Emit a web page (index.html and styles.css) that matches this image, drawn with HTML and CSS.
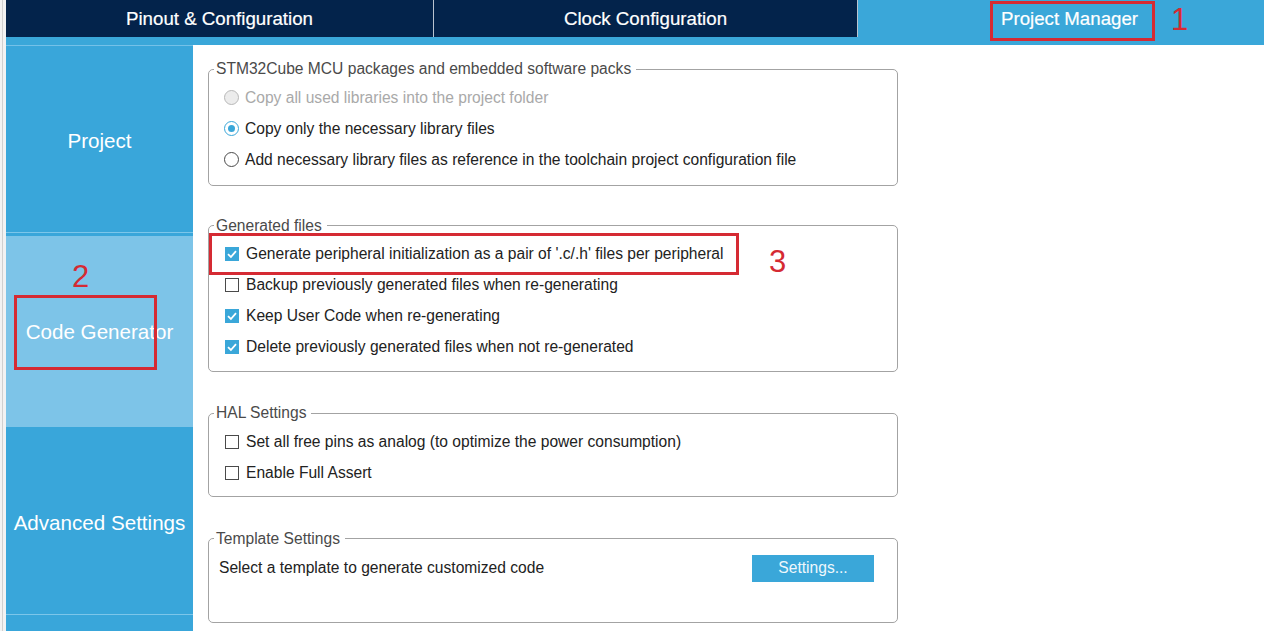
FILE: index.html
```html
<!DOCTYPE html>
<html lang="en">
<head>
<meta charset="utf-8">
<title>Project Manager - Code Generator</title>
<link rel="stylesheet" href="styles.css">
</head>
<body>
<div class="app">
  <div class="gutter"></div>
  <div class="main">
    <nav class="tabs">
      <div class="tab tab-first">Pinout &amp; Configuration</div>
      <div class="tab-sep"></div>
      <div class="tab">Clock Configuration</div>
      <div class="tab-sep"></div>
      <div class="tab tab-active">Project Manager</div>
    </nav>
    <div class="strip"></div>
    <div class="body">
      <aside class="sidebar">
        <div class="side-item side-project">Project</div>
        <div class="side-gap"></div>
        <div class="side-item side-code">Code Generator</div>
        <div class="side-item side-adv">Advanced Settings</div>
        <div class="side-item side-rest"></div>
      </aside>
      <section class="content">
        <fieldset class="group group-first">
          <legend>STM32Cube MCU packages and embedded software packs</legend>
          <div class="row disabled"><span class="radio radio-disabled"></span><span>Copy all used libraries into the project folder</span></div>
          <div class="row"><span class="radio radio-on"></span><span>Copy only the necessary library files</span></div>
          <div class="row"><span class="radio"></span><span>Add necessary library files as reference in the toolchain project configuration file</span></div>
        </fieldset>

        <fieldset class="group">
          <legend>Generated files</legend>
          <div class="row"><span class="check check-on"><svg viewBox="0 0 14 14" width="14" height="14"><path d="M3 7.2 L5.9 10 L11 4.2" fill="none" stroke="#fff" stroke-width="1.8"/></svg></span><span>Generate peripheral initialization as a pair of '.c/.h' files per peripheral</span></div>
          <div class="row"><span class="check"></span><span>Backup previously generated files when re-generating</span></div>
          <div class="row"><span class="check check-on"><svg viewBox="0 0 14 14" width="14" height="14"><path d="M3 7.2 L5.9 10 L11 4.2" fill="none" stroke="#fff" stroke-width="1.8"/></svg></span><span>Keep User Code when re-generating</span></div>
          <div class="row"><span class="check check-on"><svg viewBox="0 0 14 14" width="14" height="14"><path d="M3 7.2 L5.9 10 L11 4.2" fill="none" stroke="#fff" stroke-width="1.8"/></svg></span><span>Delete previously generated files when not re-generated</span></div>
        </fieldset>

        <fieldset class="group">
          <legend>HAL Settings</legend>
          <div class="row"><span class="check"></span><span>Set all free pins as analog (to optimize the power consumption)</span></div>
          <div class="row"><span class="check"></span><span>Enable Full Assert</span></div>
        </fieldset>

        <fieldset class="group group-template">
          <legend>Template Settings</legend>
          <div class="template-body">
            <div class="template-row">
              <span>Select a template to generate customized code</span>
              <button class="btn" type="button">Settings...</button>
            </div>
          </div>
        </fieldset>
      </section>
    </div>
  </div>
</div>

<div class="mark mark-box box-1"></div>
<div class="mark mark-num num-1">1</div>
<div class="mark mark-box box-2"></div>
<div class="mark mark-num num-2">2</div>
<div class="mark mark-box box-3"></div>
<div class="mark mark-num num-3">3</div>
</body>
</html>
```

FILE: styles.css
```css
* { box-sizing: border-box; }

html, body {
  margin: 0;
  padding: 0;
  width: 1264px;
  height: 631px;
  overflow: hidden;
  background: #ffffff;
  font-family: "Liberation Sans", Arial, sans-serif;
}

.app {
  display: flex;
  width: 1264px;
  height: 631px;
}

.gutter {
  width: 6px;
  flex: 0 0 6px;
  background: #f2f2f2;
  box-shadow: inset -3px 0 0 #f2f2f2, inset -4px 0 0 #d0d0d0;
}

.main {
  flex: 1;
  display: flex;
  flex-direction: column;
  min-width: 0;
  overflow: hidden;
}

/* top tabs */
.tabs {
  display: flex;
  height: 37px;
  background: #03234b;
  flex: 0 0 37px;
}

.tab {
  flex: 0 0 423px;
  display: flex;
  align-items: center;
  justify-content: center;
  color: #ffffff;
  font-size: 18.7px;
  -webkit-text-stroke: 0.2px #ffffff;
  background: #03234b;
}

.tab-first { flex-basis: 427px; }

.tab-sep {
  flex: 0 0 1px;
  background: #b9c3cf;
}

.tab-active {
  flex: 1 1 auto;
  padding-left: 17px;
  background: #3aa7d9;
}

.strip {
  height: 8px;
  flex: 0 0 8px;
  background: #3aa7d9;
}

.body {
  flex: 1;
  display: flex;
  min-height: 0;
}

/* sidebar */
.sidebar {
  width: 187px;
  flex: 0 0 187px;
  display: flex;
  flex-direction: column;
  background: #39a6da;
  border-top: 1px solid #74c1e8;
}

.side-item {
  display: flex;
  align-items: center;
  justify-content: center;
  color: #ffffff;
  font-size: 20.6px;
}

.side-project {
  height: 187px;
  padding-top: 4px;
  background: #39a6da;
  border-bottom: 1px solid #7cc6ea;
}

.side-gap {
  height: 3px;
  background: #39a6da;
}

.side-code {
  height: 191px;
  background: #7dc4e8;
}

.side-adv {
  height: 188px;
  padding-top: 4px;
  background: #39a6da;
  border-bottom: 1px solid #7cc6ea;
}

.side-rest {
  flex: 1;
  background: #39a6da;
}

/* content */
.content {
  flex: 1;
  display: flex;
  flex-direction: column;
  gap: 32.5px;
  padding: 15px 0 0 15px;
  background: #ffffff;
}

.group {
  width: 690px;
  margin: 0;
  padding: 4px 10px 8px 5px;
  border: 1px solid #a3a3a3;
  border-radius: 5px;
  font-size: 15.6px;
  color: #222222;
}

.group-first {
  padding-bottom: 10px;
  margin-bottom: -2px;
}

.group legend {
  padding: 0 5px 0 2px;
  line-height: 18px;
  color: #4a4a4a;
  font-size: 15.6px;
}

.row {
  display: flex;
  align-items: center;
  gap: 7px;
  height: 31px;
  padding-left: 11px;
  white-space: nowrap;
}

.row.disabled { color: #a9a9a9; }

.radio {
  width: 15px;
  height: 15px;
  flex: 0 0 15px;
  border: 1px solid #4a4a4a;
  border-radius: 50%;
  background: #ffffff;
  margin-left: -1px;
  margin-right: -1px;
}

.radio-disabled {
  border-color: #b8b8b8;
  background: #ececec;
}

.radio-on {
  border-color: #3aa7d9;
  display: flex;
  align-items: center;
  justify-content: center;
}

.radio-on::after {
  content: "";
  width: 7px;
  height: 7px;
  border-radius: 50%;
  background: #3aa7d9;
}

.check {
  width: 14px;
  height: 14px;
  flex: 0 0 14px;
  border: 1px solid #4a4a4a;
  background: #ffffff;
  display: flex;
}

.check svg { display: block; }

.check-on {
  border: none;
  background: #3aa7d9;
}

.template-body {
  height: 62px;
  padding-top: 3px;
}

.template-row {
  display: flex;
  align-items: center;
  justify-content: space-between;
  height: 27px;
  padding: 0 13px 0 5px;
}

.btn {
  width: 122px;
  height: 27px;
  border: none;
  border-radius: 0;
  background: #3aa7d9;
  color: #eef7fc;
  font-family: "Liberation Sans", Arial, sans-serif;
  font-size: 15.6px;
  padding: 0;
}

/* red annotations laid over the screenshot */
.mark {
  position: absolute;
}

.mark-box {
  border: 3px solid #d52a33;
}

.box-1 { left: 990px; top: 1px; width: 165px; height: 40px; }
.box-2 { left: 14px; top: 295px; width: 143px; height: 75px; }
.box-3 { left: 209px; top: 233px; width: 530px; height: 42px; }

.mark-num {
  font-family: "Liberation Sans", Arial, sans-serif;
  font-size: 31px;
  line-height: 31px;
  color: #d52a33;
}

.num-1 { left: 1171px; top: 4px; }
.num-2 { left: 72px; top: 261px; }
.num-3 { left: 769px; top: 246px; }
```
